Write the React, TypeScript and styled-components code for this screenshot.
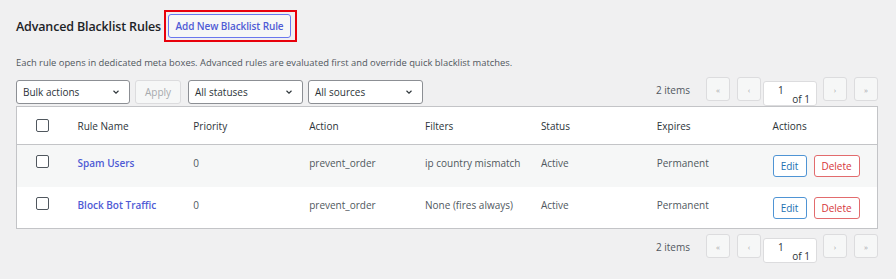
import React from 'react'
import styled, { createGlobalStyle } from 'styled-components'

const GlobalStyle = createGlobalStyle`
  html, body {
    margin: 0;
    padding: 0;
    background: #f0f0f1;
    font-family: 'Open Sans', 'Noto Sans', sans-serif;
    color: #50575e;
  }
`

const Page = styled.div`
  padding: 8px 18px 0 16px;
  width: 862px;
`

const TitleRow = styled.div`
  display: flex;
  align-items: center;
  gap: 3px;
  height: 36px;
`

const Title = styled.h1`
  margin: 0;
  font-size: 12.5px;
  font-weight: 600;
  color: #1d2327;
  letter-spacing: -0.15px;
`

const Highlight = styled.span`
  display: inline-flex;
  border: 2px solid #e8000b;
  padding: 2px 4px 2px 2px;
`

const PrimaryOutline = styled.button`
  height: 24px;
  width: 123px;
  padding: 0;
  border: 1px solid #6a78ee;
  border-radius: 3px;
  background: #f6f7f7;
  color: #4f5bd5;
  font-family: inherit;
  font-size: 10px;
  font-weight: 600;
  letter-spacing: -0.1px;
`

const Description = styled.p`
  margin: 12px 0 0;
  font-size: 9.4px;
  color: #50575e;
  line-height: 13px;
`

const NavBar = styled.div<{ $top: number }>`
  display: flex;
  align-items: flex-start;
  justify-content: space-between;
  height: 29px;
  margin-top: ${p => p.$top}px;
`

const Left = styled.div`
  display: flex;
  align-items: center;
  gap: 5px;
  margin-top: 3px;
`

const SelectBox = styled.div<{ $w: number; $ml?: number }>`
  box-sizing: border-box;
  width: ${p => p.$w}px;
  margin-left: ${p => p.$ml || 0}px;
  height: 24px;
  border: 1px solid #8c8f94;
  border-radius: 3px;
  background: #fff;
  display: flex;
  align-items: center;
  justify-content: space-between;
  padding: 0 8px 0 6px;
  font-size: 10px;
  color: #2c3338;
`

const ApplyButton = styled.div`
  box-sizing: border-box;
  width: 46px;
  height: 24px;
  border: 1px solid #dcdcde;
  border-radius: 3px;
  background: #f6f7f7;
  color: #a7aaad;
  display: flex;
  align-items: center;
  justify-content: center;
  font-size: 10px;
`

const Pager = styled.div`
  display: flex;
  align-items: flex-start;
`

const Count = styled.span`
  font-size: 10px;
  color: #50575e;
  margin: 6px 16px 0 0;
`

const PageBtn = styled.div<{ $ml: number }>`
  box-sizing: border-box;
  width: 24px;
  height: 24px;
  margin-left: ${p => p.$ml}px;
  border: 1px solid #dcdcde;
  border-radius: 3px;
  background: #f6f7f7;
  color: #a7aaad;
  font-size: 8px;
  display: flex;
  align-items: center;
  justify-content: center;
`

const PageInput = styled.div`
  box-sizing: border-box;
  width: 54px;
  height: 25px;
  margin-left: 2px;
  margin-top: 4px;
  border: 1px solid #dcdcde;
  border-radius: 3px;
  background: #fff;
  font-size: 10px;
  color: #2c3338;
  display: flex;
  justify-content: space-between;
  padding: 0 6px 0 14px;
`

const PageNum = styled.span`
  line-height: 16px;
`

const PageOf = styled.span`
  line-height: 34px;
`

const Table = styled.table`
  width: 862px;
  border-collapse: collapse;
  background: #fff;
  border: 1px solid #c3c4c7;
  table-layout: fixed;
  font-size: 10px;
  white-space: nowrap;
`

const Th = styled.th`
  height: 37px;
  padding: 0 11px;
  text-align: left;
  font-weight: 400;
  color: #2c3338;
  border-bottom: 1px solid #c3c4c7;
`

const Row = styled.tr<{ $alt?: boolean }>`
  background: ${p => (p.$alt ? '#f6f7f7' : '#fff')};
`

const Td = styled.td`
  height: 42px;
  padding: 11px 11px 0;
  color: #50575e;
  vertical-align: top;
  box-sizing: border-box;
`

const CheckCell = styled.td`
  padding: 10px 0 0 19px;
  vertical-align: top;
`

const CheckHead = styled.th`
  box-sizing: border-box;
  width: 50px;
  padding: 0 0 0 19px;
  text-align: left;
  border-bottom: 1px solid #c3c4c7;
`

const Check = styled.span`
  display: block;
  box-sizing: border-box;
  width: 13px;
  height: 13px;
  border: 1px solid #50575e;
  border-radius: 2px;
  background: #fff;
`

const NameLink = styled.a`
  color: #4f5bd5;
  font-weight: 600;
  text-decoration: none;
`

const Actions = styled.div`
  display: flex;
  gap: 7px;
  margin-top: -1px;
`

const ActionBtn = styled.button<{ $danger?: boolean }>`
  box-sizing: border-box;
  width: ${p => (p.$danger ? 46 : 34)}px;
  height: 22px;
  padding: 0;
  border: 1px solid ${p => (p.$danger ? '#e26b6d' : '#4f94d4')};
  border-radius: 3px;
  background: #fff;
  color: ${p => (p.$danger ? '#d63638' : '#2271b1')};
  font-family: inherit;
  font-size: 10px;
`

const Chevron = () => (
  <svg width="10" height="10" viewBox="0 0 20 20">
    <path d="M5 7.5l5 5 5-5" fill="none" stroke="#2c3338" strokeWidth="2.2" />
  </svg>
)

const rules = [
  { name: 'Spam Users', priority: 0, action: 'prevent_order', filters: 'ip country mismatch', status: 'Active', expires: 'Permanent' },
  { name: 'Block Bot Traffic', priority: 0, action: 'prevent_order', filters: 'None (fires always)', status: 'Active', expires: 'Permanent' },
]

const Pagination = () => (
  <Pager>
    <Count>2 items</Count>
    <PageBtn $ml={0}>«</PageBtn>
    <PageBtn $ml={7}>‹</PageBtn>
    <PageInput>
      <PageNum>1</PageNum>
      <PageOf>of 1</PageOf>
    </PageInput>
    <PageBtn $ml={6}>›</PageBtn>
    <PageBtn $ml={7}>»</PageBtn>
  </Pager>
)

export default function App() {
  return (
    <Page>
      <GlobalStyle />
      <TitleRow>
        <Title>Advanced Blacklist Rules</Title>
        <Highlight>
          <PrimaryOutline>Add New Blacklist Rule</PrimaryOutline>
        </Highlight>
      </TitleRow>
      <Description>
        Each rule opens in dedicated meta boxes. Advanced rules are evaluated first and override quick blacklist matches.
      </Description>
      <NavBar $top={8}>
        <Left>
          <SelectBox $w={114}>
            Bulk actions <Chevron />
          </SelectBox>
          <ApplyButton>Apply</ApplyButton>
          <SelectBox $w={115} $ml={2}>
            All statuses <Chevron />
          </SelectBox>
          <SelectBox $w={115}>
            All sources <Chevron />
          </SelectBox>
        </Left>
        <Pagination />
      </NavBar>
      <Table>
        <thead>
          <tr>
            <CheckHead>
              <Check />
            </CheckHead>
            <Th>Rule Name</Th>
            <Th>Priority</Th>
            <Th>Action</Th>
            <Th>Filters</Th>
            <Th>Status</Th>
            <Th>Expires</Th>
            <Th>Actions</Th>
          </tr>
        </thead>
        <tbody>
          {rules.map((r, i) => (
            <Row key={r.name} $alt={i === 0}>
              <CheckCell>
                <Check />
              </CheckCell>
              <Td>
                <NameLink href="#">{r.name}</NameLink>
              </Td>
              <Td>{r.priority}</Td>
              <Td>{r.action}</Td>
              <Td>{r.filters}</Td>
              <Td>{r.status}</Td>
              <Td>{r.expires}</Td>
              <Td>
                <Actions>
                  <ActionBtn>Edit</ActionBtn>
                  <ActionBtn $danger>Delete</ActionBtn>
                </Actions>
              </Td>
            </Row>
          ))}
        </tbody>
      </Table>
      <NavBar $top={5}>
        <div />
        <Pagination />
      </NavBar>
    </Page>
  )
}
